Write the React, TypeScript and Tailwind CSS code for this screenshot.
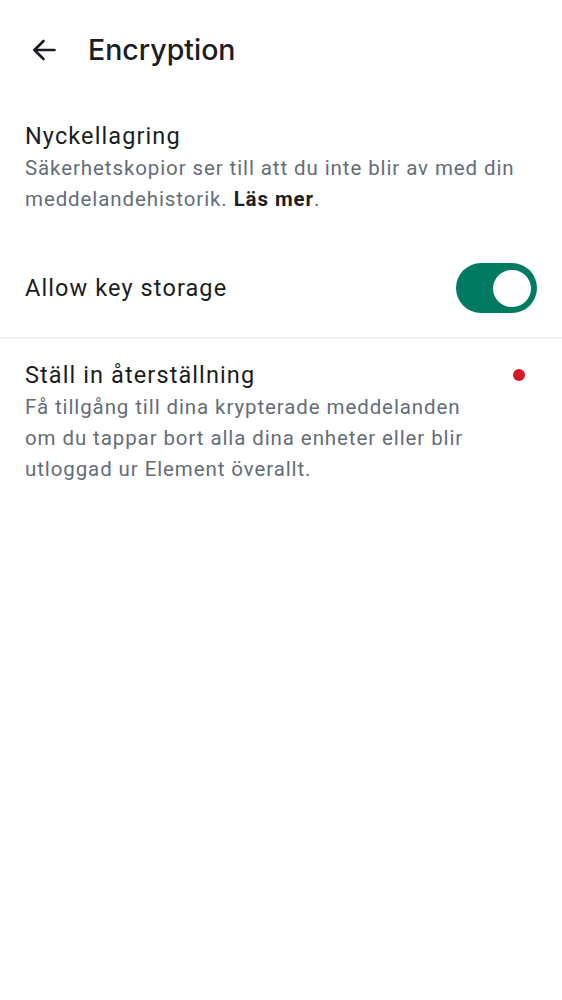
const titleFont = { fontFamily: 'Inter, "Noto Sans", sans-serif' };
const bodyFont = { fontFamily: 'Roboto, "Noto Sans", sans-serif' };

function BackArrow() {
  return (
    <svg width="24" height="22" viewBox="0 0 24 22" fill="none" stroke="#1b1d22" strokeWidth="2.6" strokeLinecap="round" strokeLinejoin="round">
      <path d="M22.5 11H2.5" />
      <path d="M11.5 2L2.5 11L11.5 20" />
    </svg>
  );
}

function Toggle({ on }: { on: boolean }) {
  return (
    <div
      className={`flex h-[50px] w-[81px] shrink-0 items-center rounded-full px-[6px] ${
        on ? 'justify-end bg-[#007a61]' : 'justify-start bg-[#c1c6cd]'
      }`}
    >
      <div className="h-[37px] w-[38px] rounded-full bg-white" />
    </div>
  );
}

export default function App() {
  return (
    <div className="min-h-[1000px] w-[562px] bg-white text-[#1b1d22]" style={bodyFont}>
      <header className="flex h-[100px] items-center pl-[32px]">
        <div className="flex h-[22px] w-[24px] items-center">
          <BackArrow />
        </div>
        <h1 className="ml-[32px] text-[28.5px] font-medium leading-none" style={titleFont}>
          Encryption
        </h1>
      </header>

      <section className="px-[25px] pt-[19px]">
        <h2 className="text-[23.5px] leading-[34px] tracking-[1.1px]">Nyckellagring</h2>
        <p className="text-[20.5px] leading-[31px] tracking-[0.9px] text-[#656d77]">
          Säkerhetskopior ser till att du inte blir av med din meddelandehistorik.{' '}
          <b className="font-bold text-[#1b1d22]">Läs mer</b>.
        </p>
      </section>

      <div className="flex items-center justify-between px-[25px] pt-[48px] pb-[24px]">
        <span className="text-[23.5px] leading-[32px] tracking-[1.1px]">Allow key storage</span>
        <Toggle on />
      </div>

      <div className="h-[2px] bg-[#f0f1f5]" />

      <section className="flex items-start justify-between pl-[25px] pr-[37px] pt-[19px]">
        <div>
          <h2 className="text-[23.5px] leading-[34px] tracking-[1.1px]">Ställ in återställning</h2>
          <p className="text-[20.5px] leading-[31px] tracking-[0.9px] text-[#656d77]">
            Få tillgång till dina krypterade meddelanden
            <br />
            om du tappar bort alla dina enheter eller blir
            <br />
            utloggad ur Element överallt.
          </p>
        </div>
        <div className="mt-[11px] h-[12px] w-[12px] shrink-0 rounded-full bg-[#d51928]" />
      </section>
    </div>
  );
}
